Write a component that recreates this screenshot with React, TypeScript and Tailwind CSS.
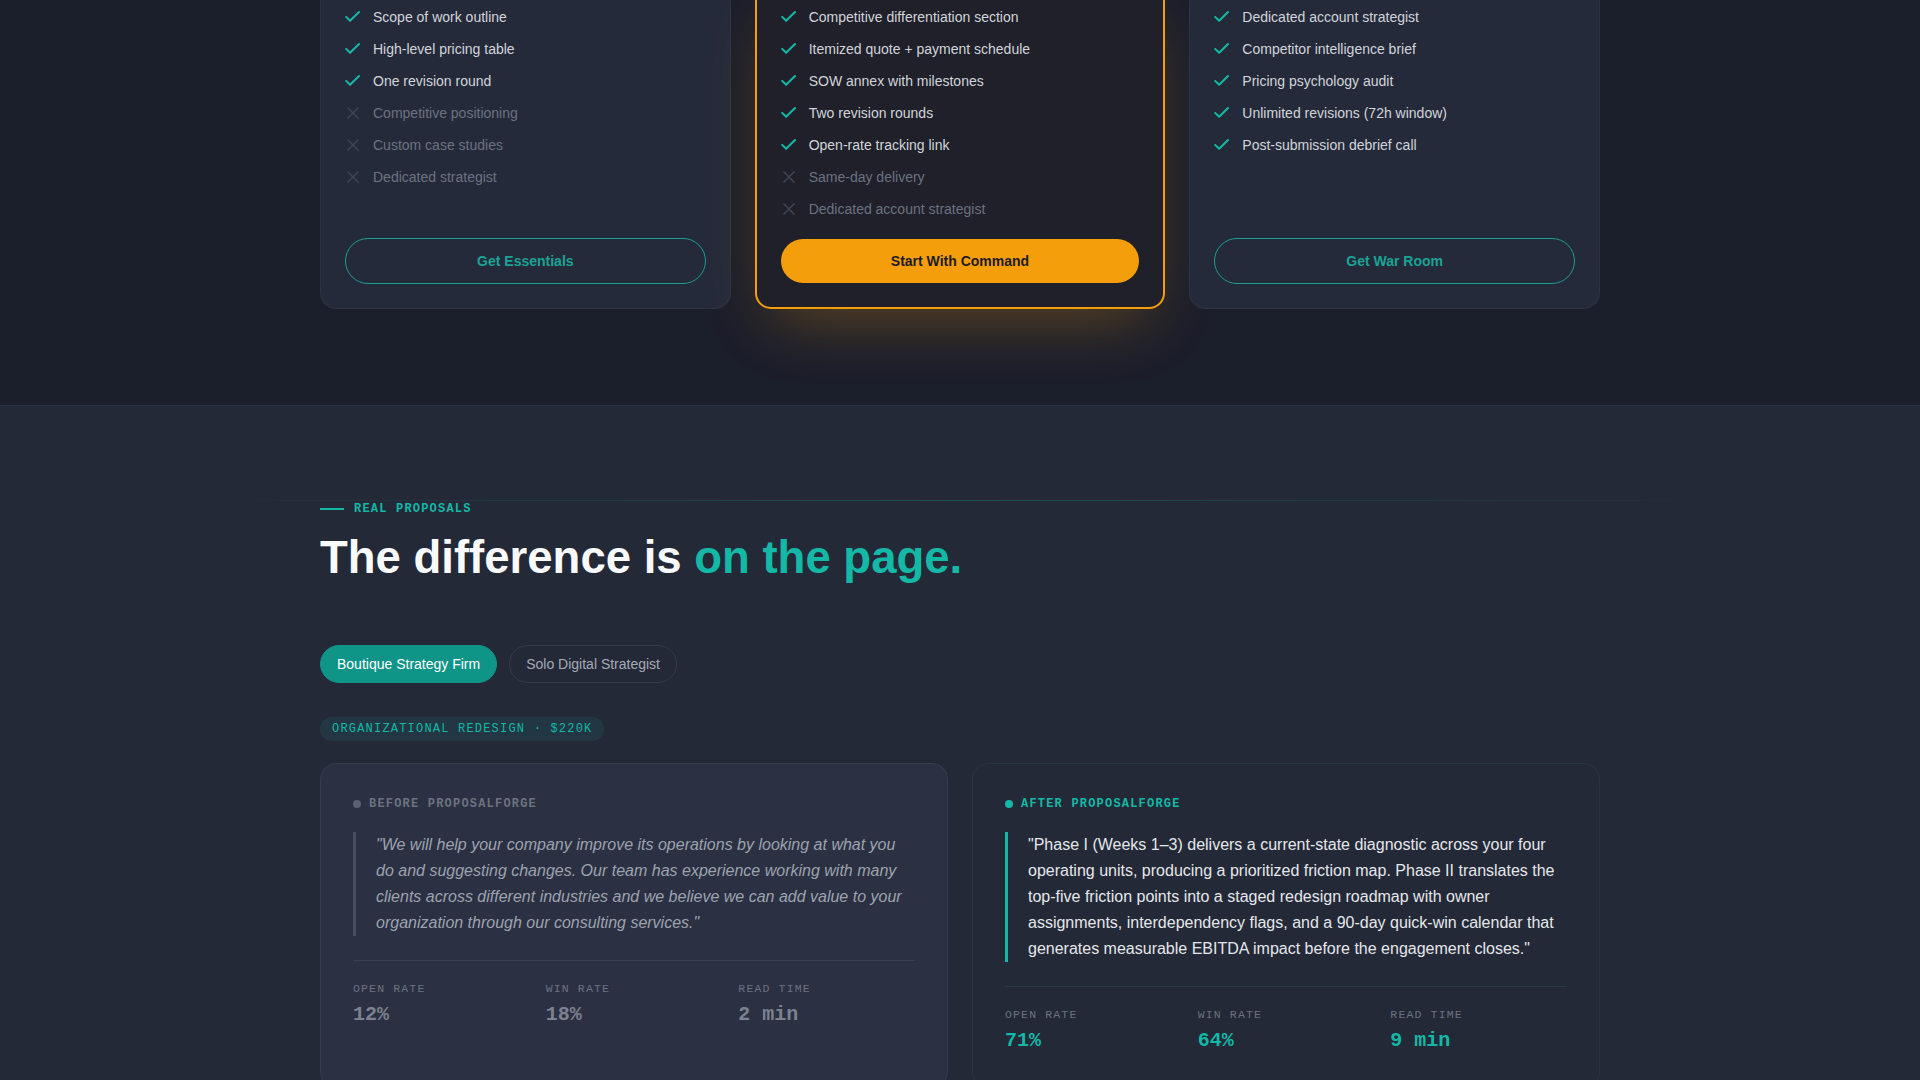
import React from "react";

type Item = { text: string; ok: boolean };

const CheckIcon = () => (
  <svg viewBox="0 0 16 16" className="h-4 w-4 shrink-0" fill="none" stroke="#14b8a6" strokeWidth="2" strokeLinecap="round" strokeLinejoin="round">
    <path d="M1.2 7.9 5.1 11.8 14 3" />
  </svg>
);

const XIcon = () => (
  <svg viewBox="0 0 16 16" className="h-4 w-4 shrink-0" fill="none" stroke="#3f4556" strokeWidth="1.5" strokeLinecap="round">
    <path d="M3 3 13 13M13 3 3 13" />
  </svg>
);

function FeatureList({ items }: { items: Item[] }) {
  return (
    <ul className="flex flex-1 flex-col gap-3">
      {items.map((it) => (
        <li key={it.text} className="flex items-center gap-3 text-sm leading-5">
          {it.ok ? <CheckIcon /> : <XIcon />}
          <span className={it.ok ? "text-[#d1d5db]" : "text-[#6b7280]"}>{it.text}</span>
        </li>
      ))}
    </ul>
  );
}

const essentials: Item[] = [
  { text: "Scope of work outline", ok: true },
  { text: "High-level pricing table", ok: true },
  { text: "One revision round", ok: true },
  { text: "Competitive positioning", ok: false },
  { text: "Custom case studies", ok: false },
  { text: "Dedicated strategist", ok: false },
];

const command: Item[] = [
  { text: "Competitive differentiation section", ok: true },
  { text: "Itemized quote + payment schedule", ok: true },
  { text: "SOW annex with milestones", ok: true },
  { text: "Two revision rounds", ok: true },
  { text: "Open-rate tracking link", ok: true },
  { text: "Same-day delivery", ok: false },
  { text: "Dedicated account strategist", ok: false },
];

const warRoom: Item[] = [
  { text: "Dedicated account strategist", ok: true },
  { text: "Competitor intelligence brief", ok: true },
  { text: "Pricing psychology audit", ok: true },
  { text: "Unlimited revisions (72h window)", ok: true },
  { text: "Post-submission debrief call", ok: true },
];

function Stat({ label, value, accent }: { label: string; value: string; accent: boolean }) {
  return (
    <div>
      <div className="font-['Liberation_Mono',monospace] text-[11.5px] leading-4 tracking-[0.1em] text-[#6b7280]">{label}</div>
      <div
        className={
          "mt-1 font-['Liberation_Mono',monospace] text-xl font-bold leading-7 " +
          (accent ? "text-[#14b8a6]" : "text-[#7c8291]")
        }
      >
        {value}
      </div>
    </div>
  );
}

export default function App() {
  return (
    <div className="flex min-h-screen flex-col overflow-hidden bg-[#242938] font-['Liberation_Sans',Arial,sans-serif]">
      {/* Pricing section (scrolled) */}
      <section className="-mt-[18px] bg-[#1b1e2b] pb-24">
        <div className="mx-auto grid w-[1280px] grid-cols-3 gap-6">
          <div className="flex flex-col rounded-2xl border border-[#2e3445] bg-[#252a3a] px-6 pb-6 pt-6">
            <FeatureList items={essentials} />
            <button className="mt-5 w-full rounded-full border border-[#1a9e90] py-3 text-sm font-bold leading-5 text-[#1aa394]">
              Get Essentials
            </button>
          </div>
          <div className="flex flex-col rounded-2xl border-2 border-[#f59e0b] bg-[#1f2029] px-6 pb-6 pt-[23px] shadow-[0_26px_60px_-18px_rgba(245,158,11,0.32)]">
            <FeatureList items={command} />
            <button className="mt-5 w-full rounded-full bg-[#f59e0b] py-3 text-sm font-bold leading-5 text-[#1b1c22]">
              Start With Command
            </button>
          </div>
          <div className="flex flex-col rounded-2xl border border-[#2e3445] bg-[#252a3a] px-6 pb-6 pt-6">
            <FeatureList items={warRoom} />
            <button className="mt-5 w-full rounded-full border border-[#1a9e90] py-3 text-sm font-bold leading-5 text-[#1aa394]">
              Get War Room
            </button>
          </div>
        </div>
      </section>

      {/* Real proposals section */}
      <section className="border-t border-[#2a2f3f] bg-[#242938] pb-24 pt-[94px]">
        <div className="mx-auto h-px w-[1540px] bg-gradient-to-r from-transparent via-[#14b8a6]/25 to-transparent" />
        <div className="mx-auto w-[1280px]">
          <div className="flex items-center gap-2.5">
            <span className="h-[2px] w-6 bg-[#14b8a6]" />
            <span className="font-['Liberation_Mono',monospace] text-xs font-bold leading-4 tracking-[0.1em] text-[#14b8a6]">
              REAL PROPOSALS
            </span>
          </div>
          <h2 className="mt-[16px] text-[45.5px] font-bold leading-[1.1] text-[#f8fafc]">
            The difference is <span className="text-[#14b8a6]">on the page.</span>
          </h2>

          <div className="mt-[62px] flex gap-3">
            <button className="rounded-full border border-[#0f9488] bg-[#0f9488] px-4 py-2 text-sm leading-5 text-white">
              Boutique Strategy Firm
            </button>
            <button className="rounded-full border border-[#343a4b] px-4 py-2 text-sm leading-5 text-[#a3a9b6]">
              Solo Digital Strategist
            </button>
          </div>

          <div className="mt-[34px] inline-flex rounded-full bg-[#14b8a6]/10 px-3 py-1 font-['Liberation_Mono',monospace] text-xs leading-4 tracking-[0.1em] text-[#14b8a6]">
            ORGANIZATIONAL REDESIGN · $220K
          </div>

          <div className="mt-[22px] grid grid-cols-2 gap-6">
            <div className="rounded-2xl border border-[#363c4e] bg-[#2b3042] p-8">
              <div className="flex items-center gap-2">
                <span className="h-2 w-2 rounded-full bg-[#5b6172]" />
                <span className="font-['Liberation_Mono',monospace] text-xs font-bold leading-4 tracking-[0.1em] text-[#6b7280]">
                  BEFORE PROPOSALFORGE
                </span>
              </div>
              <p className="mt-5 border-l-[3px] border-[#4a5062] pl-5 text-base italic leading-[26px] text-[#9ca3af]">
                "We will help your company improve its operations by looking at what you do and suggesting changes. Our team has experience working with many clients across different industries and we believe we can add value to your organization through our consulting services."
              </p>
              <div className="mt-[24px] grid grid-cols-3 gap-4 border-t border-[#3a4052] pt-[20px]">
                <Stat label="OPEN RATE" value="12%" accent={false} />
                <Stat label="WIN RATE" value="18%" accent={false} />
                <Stat label="READ TIME" value="2 min" accent={false} />
              </div>
            </div>

            <div className="rounded-2xl border border-[#253741] bg-[#232937] p-8">
              <div className="flex items-center gap-2">
                <span className="h-2 w-2 rounded-full bg-[#14b8a6]" />
                <span className="font-['Liberation_Mono',monospace] text-xs font-bold leading-4 tracking-[0.1em] text-[#14b8a6]">
                  AFTER PROPOSALFORGE
                </span>
              </div>
              <p className="mt-5 border-l-[3px] border-[#14b8a6] pl-5 text-base leading-[26px] text-[#e5e7eb]">
                "Phase I (Weeks 1–3) delivers a current-state diagnostic across your four operating units, producing a prioritized friction map. Phase II translates the top-five friction points into a staged redesign roadmap with owner assignments, interdependency flags, and a 90-day quick-win calendar that generates measurable EBITDA impact before the engagement closes."
              </p>
              <div className="mt-[24px] grid grid-cols-3 gap-4 border-t border-[#2a3a44] pt-[20px]">
                <Stat label="OPEN RATE" value="71%" accent={true} />
                <Stat label="WIN RATE" value="64%" accent={true} />
                <Stat label="READ TIME" value="9 min" accent={true} />
              </div>
            </div>
          </div>
        </div>
      </section>
    </div>
  );
}
